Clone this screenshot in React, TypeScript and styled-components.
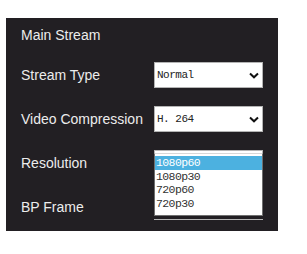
import React from 'react';
import styled, { createGlobalStyle } from 'styled-components';

const GlobalStyle = createGlobalStyle`
	html, body {
		margin: 0;
		padding: 0;
		background: #ffffff;
	}
	body {
		font-family: "Liberation Sans", Arial, sans-serif;
	}
`;

const Page = styled.div`
	width: 307px;
	height: 254px;
	padding: 18px 0 0 6px;
	box-sizing: border-box;
`;

const Panel = styled.div`
	width: 272px;
	height: 213px;
	background: #221f23;
	padding: 9px 0 0 15px;
	box-sizing: border-box;
	color: #ececec;
	font-size: 14px;
`;

const Title = styled.div`
	line-height: 16px;
	margin-bottom: 19px;
`;

const Rows = styled.div`
	display: flex;
	flex-direction: column;
	gap: 18px;
`;

const Row = styled.div`
	display: flex;
	align-items: center;
	height: 26px;
`;

const Label = styled.div`
	width: 133px;
	line-height: 16px;
	white-space: nowrap;
`;

const SelectBox = styled.div`
	position: relative;
	width: 109px;
	height: 26px;
	box-sizing: border-box;
	background: #ffffff;
	border: 1px solid #b4b4b4;
	display: flex;
	align-items: center;
	justify-content: space-between;
	padding: 0 3px 0 2px;
	color: #222222;
	font-family: "Liberation Mono", "Courier New", monospace;
	font-size: 11px;
	letter-spacing: -0.5px;
`;

const Chevron = () => (
	<svg width="10" height="7" viewBox="0 0 10 7">
		<path d="M1 1.5 L5 5.3 L9 1.5" fill="none" stroke="#111" strokeWidth="2" />
	</svg>
);

const ListBox = styled.div`
	position: absolute;
	top: 2px;
	left: -1px;
	width: 109px;
	height: 63px;
	box-sizing: border-box;
	background: #ffffff;
	border: 1px solid #6f6f6f;
	border-top-color: #d8d8d8;
	padding-top: 2px;
	box-shadow: 0 3px 0 #221f23;
	z-index: 2;
	letter-spacing: -0.6px;
`;

const Option = styled.div<{ $active?: boolean }>`
	height: 13.5px;
	line-height: 13.5px;
	padding-left: 1px;
	font-family: "Liberation Mono", "Courier New", monospace;
	font-size: 11.5px;
	color: ${p => (p.$active ? '#ffffff' : '#333333')};
	background: ${p => (p.$active ? '#4cb1e0' : 'transparent')};
`;

const resolutions = ['1080p60', '1080p30', '720p60', '720p30'];

const App = () => (
	<>
		<GlobalStyle />
		<Page>
			<Panel>
				<Title>Main Stream</Title>
				<Rows>
					<Row>
						<Label>Stream Type</Label>
						<SelectBox>Normal<Chevron /></SelectBox>
					</Row>
					<Row>
						<Label>Video Compression</Label>
						<SelectBox>H. 264<Chevron /></SelectBox>
					</Row>
					<Row>
						<Label>Resolution</Label>
						<SelectBox>
							1080p60<Chevron />
							<ListBox>
								{resolutions.map((r, i) => (
									<Option key={r} $active={i === 0}>{r}</Option>
								))}
							</ListBox>
						</SelectBox>
					</Row>
					<Row>
						<Label>BP Frame</Label>
						<SelectBox><Chevron /></SelectBox>
					</Row>
				</Rows>
			</Panel>
		</Page>
	</>
);

export default App;
